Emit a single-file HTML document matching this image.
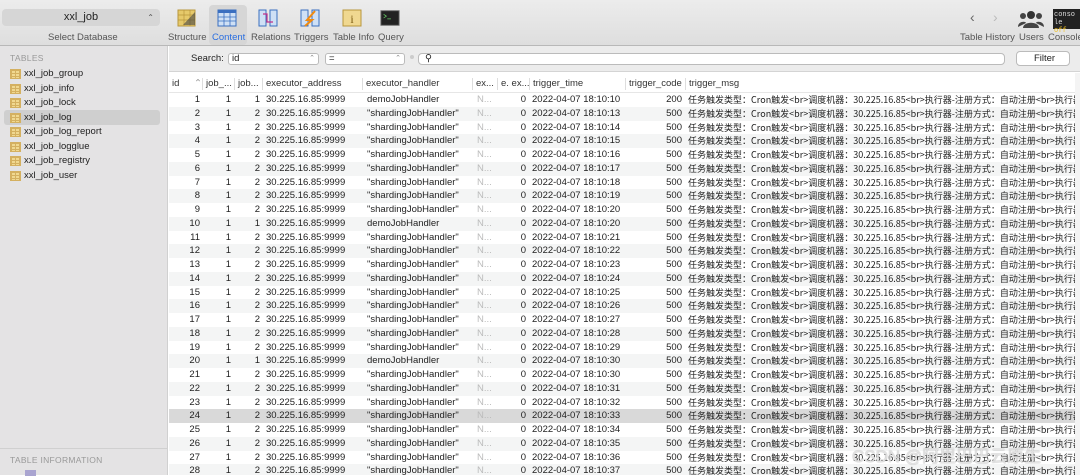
<!DOCTYPE html>
<html><head><meta charset="utf-8"><style>
*{margin:0;padding:0;box-sizing:border-box}
body{width:1080px;height:475px;overflow:hidden;font-family:"Liberation Sans","Noto Sans CJK SC",sans-serif;font-size:9.5px;color:#222;background:#fff;position:relative}
.tb{position:absolute;left:0;top:0;width:1080px;height:46px;background:linear-gradient(#ececec,#dedede);border-bottom:1px solid #b8b8b8}
.db{position:absolute;left:2px;top:9px;width:158px;height:17px;background:#d6d6d6;border-radius:4px;text-align:center;font-size:11px;line-height:17px;color:#222}
.lbl{position:absolute;top:32px;font-size:9.5px;color:#555}
.ic{position:absolute;top:9px;width:20px;height:18px}
.side{position:absolute;left:0;top:46px;width:168px;height:429px;background:#e4e3e4;border-right:1px solid #d0d0d0}
.side .h{position:absolute;left:10px;font-size:8.5px;color:#999;letter-spacing:.3px}
.t{position:absolute;left:24px;font-size:9.5px;color:#222;height:14px;line-height:14px}
.t i{position:absolute;left:-14px;top:2px;width:11px;height:10px;background:#f0d890;border:1px solid #d4b060;background-image:linear-gradient(#d4b060 1px,transparent 1px),linear-gradient(90deg,#d4b060 1px,transparent 1px);background-size:4px 3px}
.sel{position:absolute;left:4px;top:64px;width:156px;height:15px;background:#cfcfcf;border-radius:3px}
.srch{position:absolute;left:169px;top:46px;width:911px;height:26px;background:#ececec;border-bottom:1px solid #d4d4d4}
.pop{position:absolute;top:7px;height:12px;border:1px solid #bbb;border-radius:3px;background:#fff;font-size:9.5px;line-height:10px;padding-left:3px}
.hdr{position:absolute;left:169px;top:73px;width:906px;height:20px;background:#fff;border-bottom:1px solid #e6e6e6}
.hdr span{position:absolute;top:5px;font-size:9.5px;color:#333;padding-left:3px;border-left:1px solid #ddd;height:12px}
.rows{position:absolute;left:169px;top:93px;width:906px;overflow:hidden;height:382px}
.r{display:flex;height:13.75px;line-height:13.75px;white-space:nowrap;font-size:9.5px;overflow:hidden}
.r:nth-child(even){background:#f4f5f5}
.r.hl{background:#d9d9d9}
.r div{flex:none;overflow:hidden}
.a{width:33px;text-align:right;padding-right:2px}.b{width:32px;text-align:right;padding-right:3px}.c{width:28px;text-align:right;padding-right:2px}
.d{width:100px;padding-left:4px}.e{width:110px;padding-left:5px}.f{width:25px;padding-left:5px;color:#bbb}.g{width:32px;text-align:right;padding-right:3px}
.h2{width:96px;padding-left:3px}.k{width:60px;text-align:right;padding-right:3px}
.m{width:390px;padding-left:3px;font-family:"Noto Sans CJK SC",sans-serif;font-size:9px;text-spacing-trim:space-all;font-kerning:none}
.sb{position:absolute;left:1075px;top:73px;width:5px;height:402px;background:#f4f4f4}
</style></head><body>
<div class="tb">
<div class="db">xxl_job<span style="position:absolute;right:6px;top:0;font-size:8px;color:#555">⌃</span></div>
<div class="lbl" style="left:48px">Select Database</div>
<div style="position:absolute;left:209px;top:5px;width:38px;height:40px;background:#d6d6d6;border-radius:4px"></div>
<svg class="ic" style="left:177px" viewBox="0 0 20 18"><rect x="1" y="1" width="17" height="16" fill="#e6c96a" stroke="#b8963c"/><path d="M1 6H18M1 11H18M7 1V17M13 1V17" stroke="#b8963c" stroke-width=".7"/><path d="M6 16 18 3V16Z" fill="#444" opacity=".6"/></svg>
<svg class="ic" style="left:217px" viewBox="0 0 20 18"><rect x="1" y="1" width="18" height="16" fill="#cfe0f5" stroke="#3a6fc0"/><rect x="1" y="1" width="18" height="3" fill="#3a6fc0"/><path d="M1 8H19M1 12H19M7 1V17M13 1V17" stroke="#3a6fc0" stroke-width=".8"/></svg>
<svg class="ic" style="left:258px" viewBox="0 0 20 18"><rect x="1" y="1" width="7" height="16" fill="#cfe0f5" stroke="#3a6fc0"/><rect x="12" y="1" width="7" height="16" fill="#cfe0f5" stroke="#3a6fc0"/><path d="M5 5H9V13H15" stroke="#c0308a" stroke-width="1.2" fill="none"/></svg>
<svg class="ic" style="left:300px" viewBox="0 0 20 18"><rect x="1" y="1" width="7" height="16" fill="#cfe0f5" stroke="#3a6fc0"/><rect x="12" y="1" width="7" height="16" fill="#cfe0f5" stroke="#3a6fc0"/><path d="M15 2 7 11H12L5 17" stroke="#f08a10" stroke-width="2" fill="none"/></svg>
<svg class="ic" style="left:342px" viewBox="0 0 20 18"><rect x="1" y="1" width="18" height="16" fill="#f0d890" stroke="#b8963c"/><text x="10" y="14" font-size="12" text-anchor="middle" fill="#7a5a10" font-family="Liberation Serif">i</text></svg>
<svg class="ic" style="left:380px" viewBox="0 0 22 18"><rect x="1" y="1" width="20" height="16" fill="#222" stroke="#666"/><path d="M4 5 7 7 4 9M8 10H12" stroke="#6c6" stroke-width=".8" fill="none"/></svg>
<div class="lbl" style="left:168px">Structure</div>
<div class="lbl" style="left:212px;color:#2a6ee0">Content</div>
<div class="lbl" style="left:251px">Relations</div>
<div class="lbl" style="left:294px">Triggers</div>
<div class="lbl" style="left:333px">Table Info</div>
<div class="lbl" style="left:378px">Query</div>
<div style="position:absolute;left:970px;top:9px;font-size:14px;color:#666">‹</div>
<div style="position:absolute;left:993px;top:9px;font-size:14px;color:#bbb">›</div>
<svg style="position:absolute;left:1018px;top:10px" width="26" height="18" viewBox="0 0 26 18"><circle cx="13" cy="5" r="4" fill="#333"/><circle cx="5" cy="6" r="3" fill="#444"/><circle cx="21" cy="6" r="3" fill="#444"/><path d="M5 18C5 11 21 11 21 18ZM0 17C0 11 8 11 8 13M26 17C26 11 18 11 18 13" fill="#444"/></svg>
<div style="position:absolute;left:1053px;top:9px;width:27px;height:20px;background:#222;color:#ddd;font-family:'Liberation Mono';font-size:7px;line-height:8px;padding:2px 1px">conso<br>le <span style="color:#f0c020">off</span></div>
<div class="lbl" style="left:960px">Table History</div>
<div class="lbl" style="left:1019px">Users</div>
<div class="lbl" style="left:1048px">Console</div>
</div>
<div class="side">
<div class="h" style="top:7px">TABLES</div>
<div class="sel"></div>
<div class="t" style="top:21px"><i></i>xxl_job_group</div>
<div class="t" style="top:36px"><i></i>xxl_job_info</div>
<div class="t" style="top:50px"><i></i>xxl_job_lock</div>
<div class="t" style="top:65px"><i></i>xxl_job_log</div>
<div class="t" style="top:79px"><i></i>xxl_job_log_report</div>
<div class="t" style="top:94px"><i></i>xxl_job_logglue</div>
<div class="t" style="top:108px"><i></i>xxl_job_registry</div>
<div class="t" style="top:123px"><i></i>xxl_job_user</div>
<div style="position:absolute;left:0;top:402px;width:168px;border-top:1px solid #d0d0d0"></div>
<div class="h" style="top:409px">TABLE INFORMATION</div>
<div style="position:absolute;left:25px;top:424px;width:11px;height:6px;background:#a9a4d0"></div>
</div>
<div class="srch">
<span style="position:absolute;left:22px;top:7px;font-size:9.5px">Search:</span>
<div class="pop" style="left:59px;width:91px">id<span style="position:absolute;right:3px;color:#888;font-size:7px">⌃</span></div>
<div class="pop" style="left:156px;width:80px">=<span style="position:absolute;right:3px;color:#888;font-size:7px">⌃</span></div>
<span style="position:absolute;left:241px;top:9px;width:4px;height:4px;border-radius:2px;background:#ccc"></span>
<div class="pop" style="left:249px;width:587px;border-radius:4px;padding-left:6px">⚲</div>
<div class="pop" style="left:847px;width:54px;height:15px;top:5px;text-align:center;line-height:13px;border-radius:4px">Filter</div>
</div>
<div class="hdr">
<span style="left:0;border:0">id</span><span style="left:22px;border:0;color:#999">⌃</span><span style="left:33px">job_...</span><span style="left:65px">job...</span><span style="left:93px">executor_address</span><span style="left:193px">executor_handler</span><span style="left:303px">ex...</span><span style="left:328px">e. ex...</span><span style="left:360px">trigger_time</span><span style="left:456px">trigger_code</span><span style="left:516px">trigger_msg</span>
</div>
<div class="rows">
<div class="r"><div class="a">1</div><div class="b">1</div><div class="c">1</div><div class="d">30.225.16.85:9999</div><div class="e">demoJobHandler</div><div class="f">N...</div><div class="g">0</div><div class="h2">2022-04-07 18:10:10</div><div class="k">200</div><div class="m">任务触发类型：Cron触发&lt;br&gt;调度机器：30.225.16.85&lt;br&gt;执行器-注册方式：自动注册&lt;br&gt;执行器</div></div>
<div class="r"><div class="a">2</div><div class="b">1</div><div class="c">2</div><div class="d">30.225.16.85:9999</div><div class="e">"shardingJobHandler"</div><div class="f">N...</div><div class="g">0</div><div class="h2">2022-04-07 18:10:13</div><div class="k">500</div><div class="m">任务触发类型：Cron触发&lt;br&gt;调度机器：30.225.16.85&lt;br&gt;执行器-注册方式：自动注册&lt;br&gt;执行器</div></div>
<div class="r"><div class="a">3</div><div class="b">1</div><div class="c">2</div><div class="d">30.225.16.85:9999</div><div class="e">"shardingJobHandler"</div><div class="f">N...</div><div class="g">0</div><div class="h2">2022-04-07 18:10:14</div><div class="k">500</div><div class="m">任务触发类型：Cron触发&lt;br&gt;调度机器：30.225.16.85&lt;br&gt;执行器-注册方式：自动注册&lt;br&gt;执行器</div></div>
<div class="r"><div class="a">4</div><div class="b">1</div><div class="c">2</div><div class="d">30.225.16.85:9999</div><div class="e">"shardingJobHandler"</div><div class="f">N...</div><div class="g">0</div><div class="h2">2022-04-07 18:10:15</div><div class="k">500</div><div class="m">任务触发类型：Cron触发&lt;br&gt;调度机器：30.225.16.85&lt;br&gt;执行器-注册方式：自动注册&lt;br&gt;执行器</div></div>
<div class="r"><div class="a">5</div><div class="b">1</div><div class="c">2</div><div class="d">30.225.16.85:9999</div><div class="e">"shardingJobHandler"</div><div class="f">N...</div><div class="g">0</div><div class="h2">2022-04-07 18:10:16</div><div class="k">500</div><div class="m">任务触发类型：Cron触发&lt;br&gt;调度机器：30.225.16.85&lt;br&gt;执行器-注册方式：自动注册&lt;br&gt;执行器</div></div>
<div class="r"><div class="a">6</div><div class="b">1</div><div class="c">2</div><div class="d">30.225.16.85:9999</div><div class="e">"shardingJobHandler"</div><div class="f">N...</div><div class="g">0</div><div class="h2">2022-04-07 18:10:17</div><div class="k">500</div><div class="m">任务触发类型：Cron触发&lt;br&gt;调度机器：30.225.16.85&lt;br&gt;执行器-注册方式：自动注册&lt;br&gt;执行器</div></div>
<div class="r"><div class="a">7</div><div class="b">1</div><div class="c">2</div><div class="d">30.225.16.85:9999</div><div class="e">"shardingJobHandler"</div><div class="f">N...</div><div class="g">0</div><div class="h2">2022-04-07 18:10:18</div><div class="k">500</div><div class="m">任务触发类型：Cron触发&lt;br&gt;调度机器：30.225.16.85&lt;br&gt;执行器-注册方式：自动注册&lt;br&gt;执行器</div></div>
<div class="r"><div class="a">8</div><div class="b">1</div><div class="c">2</div><div class="d">30.225.16.85:9999</div><div class="e">"shardingJobHandler"</div><div class="f">N...</div><div class="g">0</div><div class="h2">2022-04-07 18:10:19</div><div class="k">500</div><div class="m">任务触发类型：Cron触发&lt;br&gt;调度机器：30.225.16.85&lt;br&gt;执行器-注册方式：自动注册&lt;br&gt;执行器</div></div>
<div class="r"><div class="a">9</div><div class="b">1</div><div class="c">2</div><div class="d">30.225.16.85:9999</div><div class="e">"shardingJobHandler"</div><div class="f">N...</div><div class="g">0</div><div class="h2">2022-04-07 18:10:20</div><div class="k">500</div><div class="m">任务触发类型：Cron触发&lt;br&gt;调度机器：30.225.16.85&lt;br&gt;执行器-注册方式：自动注册&lt;br&gt;执行器</div></div>
<div class="r"><div class="a">10</div><div class="b">1</div><div class="c">1</div><div class="d">30.225.16.85:9999</div><div class="e">demoJobHandler</div><div class="f">N...</div><div class="g">0</div><div class="h2">2022-04-07 18:10:20</div><div class="k">500</div><div class="m">任务触发类型：Cron触发&lt;br&gt;调度机器：30.225.16.85&lt;br&gt;执行器-注册方式：自动注册&lt;br&gt;执行器</div></div>
<div class="r"><div class="a">11</div><div class="b">1</div><div class="c">2</div><div class="d">30.225.16.85:9999</div><div class="e">"shardingJobHandler"</div><div class="f">N...</div><div class="g">0</div><div class="h2">2022-04-07 18:10:21</div><div class="k">500</div><div class="m">任务触发类型：Cron触发&lt;br&gt;调度机器：30.225.16.85&lt;br&gt;执行器-注册方式：自动注册&lt;br&gt;执行器</div></div>
<div class="r"><div class="a">12</div><div class="b">1</div><div class="c">2</div><div class="d">30.225.16.85:9999</div><div class="e">"shardingJobHandler"</div><div class="f">N...</div><div class="g">0</div><div class="h2">2022-04-07 18:10:22</div><div class="k">500</div><div class="m">任务触发类型：Cron触发&lt;br&gt;调度机器：30.225.16.85&lt;br&gt;执行器-注册方式：自动注册&lt;br&gt;执行器</div></div>
<div class="r"><div class="a">13</div><div class="b">1</div><div class="c">2</div><div class="d">30.225.16.85:9999</div><div class="e">"shardingJobHandler"</div><div class="f">N...</div><div class="g">0</div><div class="h2">2022-04-07 18:10:23</div><div class="k">500</div><div class="m">任务触发类型：Cron触发&lt;br&gt;调度机器：30.225.16.85&lt;br&gt;执行器-注册方式：自动注册&lt;br&gt;执行器</div></div>
<div class="r"><div class="a">14</div><div class="b">1</div><div class="c">2</div><div class="d">30.225.16.85:9999</div><div class="e">"shardingJobHandler"</div><div class="f">N...</div><div class="g">0</div><div class="h2">2022-04-07 18:10:24</div><div class="k">500</div><div class="m">任务触发类型：Cron触发&lt;br&gt;调度机器：30.225.16.85&lt;br&gt;执行器-注册方式：自动注册&lt;br&gt;执行器</div></div>
<div class="r"><div class="a">15</div><div class="b">1</div><div class="c">2</div><div class="d">30.225.16.85:9999</div><div class="e">"shardingJobHandler"</div><div class="f">N...</div><div class="g">0</div><div class="h2">2022-04-07 18:10:25</div><div class="k">500</div><div class="m">任务触发类型：Cron触发&lt;br&gt;调度机器：30.225.16.85&lt;br&gt;执行器-注册方式：自动注册&lt;br&gt;执行器</div></div>
<div class="r"><div class="a">16</div><div class="b">1</div><div class="c">2</div><div class="d">30.225.16.85:9999</div><div class="e">"shardingJobHandler"</div><div class="f">N...</div><div class="g">0</div><div class="h2">2022-04-07 18:10:26</div><div class="k">500</div><div class="m">任务触发类型：Cron触发&lt;br&gt;调度机器：30.225.16.85&lt;br&gt;执行器-注册方式：自动注册&lt;br&gt;执行器</div></div>
<div class="r"><div class="a">17</div><div class="b">1</div><div class="c">2</div><div class="d">30.225.16.85:9999</div><div class="e">"shardingJobHandler"</div><div class="f">N...</div><div class="g">0</div><div class="h2">2022-04-07 18:10:27</div><div class="k">500</div><div class="m">任务触发类型：Cron触发&lt;br&gt;调度机器：30.225.16.85&lt;br&gt;执行器-注册方式：自动注册&lt;br&gt;执行器</div></div>
<div class="r"><div class="a">18</div><div class="b">1</div><div class="c">2</div><div class="d">30.225.16.85:9999</div><div class="e">"shardingJobHandler"</div><div class="f">N...</div><div class="g">0</div><div class="h2">2022-04-07 18:10:28</div><div class="k">500</div><div class="m">任务触发类型：Cron触发&lt;br&gt;调度机器：30.225.16.85&lt;br&gt;执行器-注册方式：自动注册&lt;br&gt;执行器</div></div>
<div class="r"><div class="a">19</div><div class="b">1</div><div class="c">2</div><div class="d">30.225.16.85:9999</div><div class="e">"shardingJobHandler"</div><div class="f">N...</div><div class="g">0</div><div class="h2">2022-04-07 18:10:29</div><div class="k">500</div><div class="m">任务触发类型：Cron触发&lt;br&gt;调度机器：30.225.16.85&lt;br&gt;执行器-注册方式：自动注册&lt;br&gt;执行器</div></div>
<div class="r"><div class="a">20</div><div class="b">1</div><div class="c">1</div><div class="d">30.225.16.85:9999</div><div class="e">demoJobHandler</div><div class="f">N...</div><div class="g">0</div><div class="h2">2022-04-07 18:10:30</div><div class="k">500</div><div class="m">任务触发类型：Cron触发&lt;br&gt;调度机器：30.225.16.85&lt;br&gt;执行器-注册方式：自动注册&lt;br&gt;执行器</div></div>
<div class="r"><div class="a">21</div><div class="b">1</div><div class="c">2</div><div class="d">30.225.16.85:9999</div><div class="e">"shardingJobHandler"</div><div class="f">N...</div><div class="g">0</div><div class="h2">2022-04-07 18:10:30</div><div class="k">500</div><div class="m">任务触发类型：Cron触发&lt;br&gt;调度机器：30.225.16.85&lt;br&gt;执行器-注册方式：自动注册&lt;br&gt;执行器</div></div>
<div class="r"><div class="a">22</div><div class="b">1</div><div class="c">2</div><div class="d">30.225.16.85:9999</div><div class="e">"shardingJobHandler"</div><div class="f">N...</div><div class="g">0</div><div class="h2">2022-04-07 18:10:31</div><div class="k">500</div><div class="m">任务触发类型：Cron触发&lt;br&gt;调度机器：30.225.16.85&lt;br&gt;执行器-注册方式：自动注册&lt;br&gt;执行器</div></div>
<div class="r"><div class="a">23</div><div class="b">1</div><div class="c">2</div><div class="d">30.225.16.85:9999</div><div class="e">"shardingJobHandler"</div><div class="f">N...</div><div class="g">0</div><div class="h2">2022-04-07 18:10:32</div><div class="k">500</div><div class="m">任务触发类型：Cron触发&lt;br&gt;调度机器：30.225.16.85&lt;br&gt;执行器-注册方式：自动注册&lt;br&gt;执行器</div></div>
<div class="r hl"><div class="a">24</div><div class="b">1</div><div class="c">2</div><div class="d">30.225.16.85:9999</div><div class="e">"shardingJobHandler"</div><div class="f">N...</div><div class="g">0</div><div class="h2">2022-04-07 18:10:33</div><div class="k">500</div><div class="m">任务触发类型：Cron触发&lt;br&gt;调度机器：30.225.16.85&lt;br&gt;执行器-注册方式：自动注册&lt;br&gt;执行器</div></div>
<div class="r"><div class="a">25</div><div class="b">1</div><div class="c">2</div><div class="d">30.225.16.85:9999</div><div class="e">"shardingJobHandler"</div><div class="f">N...</div><div class="g">0</div><div class="h2">2022-04-07 18:10:34</div><div class="k">500</div><div class="m">任务触发类型：Cron触发&lt;br&gt;调度机器：30.225.16.85&lt;br&gt;执行器-注册方式：自动注册&lt;br&gt;执行器</div></div>
<div class="r"><div class="a">26</div><div class="b">1</div><div class="c">2</div><div class="d">30.225.16.85:9999</div><div class="e">"shardingJobHandler"</div><div class="f">N...</div><div class="g">0</div><div class="h2">2022-04-07 18:10:35</div><div class="k">500</div><div class="m">任务触发类型：Cron触发&lt;br&gt;调度机器：30.225.16.85&lt;br&gt;执行器-注册方式：自动注册&lt;br&gt;执行器</div></div>
<div class="r"><div class="a">27</div><div class="b">1</div><div class="c">2</div><div class="d">30.225.16.85:9999</div><div class="e">"shardingJobHandler"</div><div class="f">N...</div><div class="g">0</div><div class="h2">2022-04-07 18:10:36</div><div class="k">500</div><div class="m">任务触发类型：Cron触发&lt;br&gt;调度机器：30.225.16.85&lt;br&gt;执行器-注册方式：自动注册&lt;br&gt;执行器</div></div>
<div class="r"><div class="a">28</div><div class="b">1</div><div class="c">2</div><div class="d">30.225.16.85:9999</div><div class="e">"shardingJobHandler"</div><div class="f">N...</div><div class="g">0</div><div class="h2">2022-04-07 18:10:37</div><div class="k">500</div><div class="m">任务触发类型：Cron触发&lt;br&gt;调度机器：30.225.16.85&lt;br&gt;执行器-注册方式：自动注册&lt;br&gt;执行器</div></div>
</div>
<div class="sb"></div>
<div style="position:absolute;left:852px;top:442px;font-size:17px;color:rgba(255,255,255,.7);text-shadow:0 0 1px #888">CSDN @阿里巴巴云原生</div>
</body></html>
